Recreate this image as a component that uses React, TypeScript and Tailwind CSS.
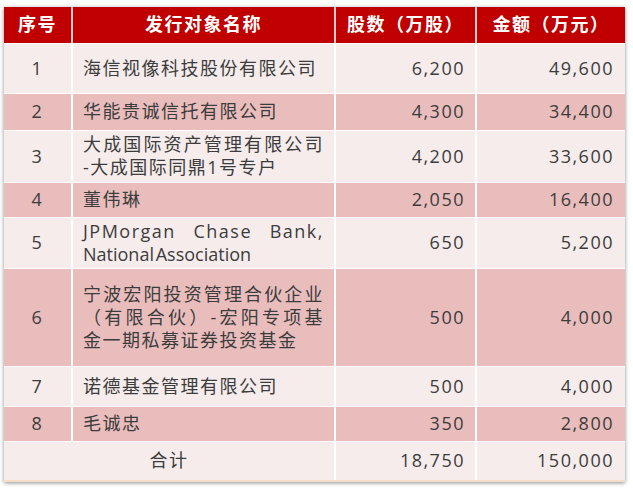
import React from 'react';

type Row = {
  no: string;
  name: React.ReactNode;
  shares: string;
  amount: string;
  h: string;
  pink: boolean;
};

const J = ({ children }: { children: React.ReactNode }) => (
  <div className="[text-align-last:justify]">{children}</div>
);

const rows: Row[] = [
  { no: '1', name: '海信视像科技股份有限公司', shares: '6,200', amount: '49,600', h: 'h-[50px]', pink: false },
  { no: '2', name: '华能贵诚信托有限公司', shares: '4,300', amount: '34,400', h: 'h-[37px]', pink: true },
  {
    no: '3',
    name: (
      <>
        <J>大成国际资产管理有限公司</J>
        <div>-大成国际同鼎1号专户</div>
      </>
    ),
    shares: '4,200',
    amount: '33,600',
    h: 'h-[52px]',
    pink: false,
  },
  { no: '4', name: '董伟琳', shares: '2,050', amount: '16,400', h: 'h-[35px]', pink: true },
  {
    no: '5',
    name: (
      <>
        <J>JPMorgan Chase Bank,</J>
        <div className="tracking-normal">National&#8202;Association</div>
      </>
    ),
    shares: '650',
    amount: '5,200',
    h: 'h-[51px]',
    pink: false,
  },
  {
    no: '6',
    name: (
      <>
        <J>宁波宏阳投资管理合伙企业</J>
        <J>（有限合伙）-宏阳专项基</J>
        <div>金一期私募证券投资基金</div>
      </>
    ),
    shares: '500',
    amount: '4,000',
    h: 'h-[98px]',
    pink: true,
  },
  { no: '7', name: '诺德基金管理有限公司', shares: '500', amount: '4,000', h: 'h-[40px]', pink: false },
  { no: '8', name: '毛诚忠', shares: '350', amount: '2,800', h: 'h-[35px]', pink: true },
];

export default function App() {
  return (
    <div className="min-h-screen bg-white pt-[7px] pl-[4px] font-['Open_Sans','Noto_Sans_CJK_SC',sans-serif]">
      <div className="w-[621px] border-b-2 border-[#f4dcc6] shadow-[0_1px_4px_rgba(0,0,0,0.45)]">
        <table className="w-full table-fixed border-collapse text-[18px] leading-[23px] tracking-[1.5px] text-[#3c3c3c]">
          <colgroup>
            <col className="w-[68px]" />
            <col className="w-[263px]" />
            <col className="w-[141px]" />
            <col className="w-[149px]" />
          </colgroup>
          <thead>
            <tr className="h-[36px] bg-[#c00000] font-bold text-white">
              <th className="border-r-2 border-white/80 text-center">序号</th>
              <th className="border-r-2 border-white/80 text-center">发行对象名称</th>
              <th className="border-r-2 border-white/80 text-center">股数（万股）</th>
              <th className="text-center">金额（万元）</th>
            </tr>
          </thead>
          <tbody>
            {rows.map((r) => (
              <tr
                key={r.no}
                className={`${r.h} border-t border-white ${r.pink ? 'bg-[#eabdbd]' : 'bg-[#f6ecec]'}`}
              >
                <td className="border-r-2 border-white text-center">{r.no}</td>
                <td className="border-r-2 border-white px-[10px] text-justify">{r.name}</td>
                <td className="border-r-2 border-white pr-[10px] text-right">{r.shares}</td>
                <td className="pr-[11px] text-right">{r.amount}</td>
              </tr>
            ))}
            <tr className="h-[39px] border-t border-white bg-[#f6ecec]">
              <td colSpan={2} className="border-r-2 border-white text-center">
                合计
              </td>
              <td className="border-r-2 border-white pr-[10px] text-right">18,750</td>
              <td className="pr-[11px] text-right">150,000</td>
            </tr>
          </tbody>
        </table>
      </div>
    </div>
  );
}
